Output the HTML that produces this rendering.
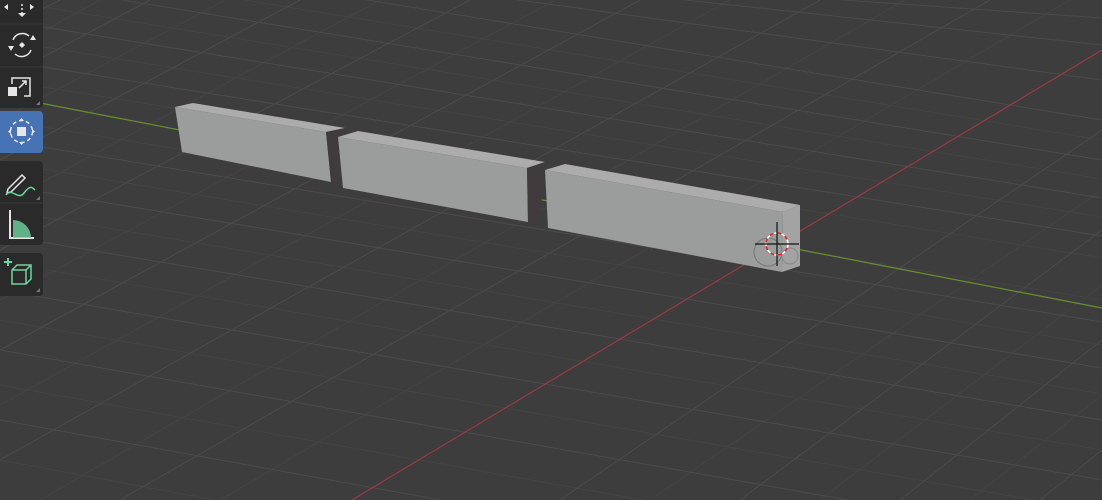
<!DOCTYPE html>
<html><head><style>
html,body{margin:0;padding:0;width:1102px;height:500px;overflow:hidden;background:#3d3d3d;}
svg{display:block;position:absolute;left:0;top:0}
</style></head><body>
<svg width="1102" height="500" viewBox="0 0 1102 500">
<rect width="1102" height="500" fill="#3d3d3d"/>
<g stroke="#444" stroke-width="1" fill="none">
<path d="M0 -40 L1102 140"/><path d="M0 0 L1102 179"/><path d="M0 40 L1102 217"/>
<path d="M0 80 L1102 258"/><path d="M0 120 L1102 300"/><path d="M0 162 L1102 345"/>
<path d="M0 210 L1102 394"/><path d="M0 262 L1102 450"/><path d="M0 320 L1102 512"/>
<path d="M0 385 L1102 582"/><path d="M0 460 L1102 665"/>
<path d="M0 205 L380 0"/><path d="M0 300 L555 0"/><path d="M0 405 L730 0"/>
<path d="M40 500 L905 0"/><path d="M220 500 L1070 0"/><path d="M650 500 L1102 190"/>
<path d="M820 500 L1102 285"/><path d="M970 500 L1102 395"/><path d="M0 120 L225 0"/><path d="M0 55 L100 0"/>
</g>
<g stroke="#4b4b4b" stroke-width="1" fill="none">
<path d="M0 -60 L1102 120"/><path d="M0 -20 L1102 160"/><path d="M0 20 L1102 198"/>
<path d="M0 60 L1102 236"/><path d="M0 140 L1102 322"/><path d="M0 185 L1102 368"/>
<path d="M0 235 L1102 420"/><path d="M0 290 L1102 480"/><path d="M0 350 L1102 545"/>
<path d="M0 420 L1102 620"/><path d="M0 500 L1102 710"/>
<path d="M300 -30 L1102 80"/><path d="M500 -20 L1102 45"/><path d="M700 -10 L1102 18"/>
<path d="M0 160 L300 0"/><path d="M0 250 L470 0"/><path d="M0 350 L640 0"/>
<path d="M0 460 L820 0"/><path d="M120 500 L990 0"/><path d="M560 500 L1102 130"/>
<path d="M740 500 L1102 230"/><path d="M900 500 L1102 340"/><path d="M1040 500 L1102 450"/>
<path d="M0 80 L150 0"/><path d="M0 30 L60 0"/>
</g>
<line x1="40" y1="103" x2="1102" y2="308" stroke="#6a8e2e" stroke-width="1.2"/>
<line x1="352" y1="500" x2="1102" y2="50" stroke="#9a3a44" stroke-width="1.2"/>
<polygon points="175,107 193,103 345,128 326,132" fill="#acacac"/>
<polygon points="175,107 326,132 331,182 182,152" fill="#9b9d9d"/>
<polygon points="326,132 345,128 342,180 331,182" fill="#403c3e"/>
<polygon points="338,137 358,131 545,162 527,168" fill="#acacac"/>
<polygon points="338,137 527,168 528,222 343,188" fill="#9b9d9d"/>
<polygon points="527,168 545,162 540,218 528,222" fill="#403c3e"/>
<polygon points="545,170 565,164 800,205 783,212" fill="#acacac"/>
<polygon points="545,170 783,212 782,272 548,228" fill="#9b9d9d"/>
<polygon points="783,212 800,205 800,266 782,272" fill="#a3a3a3"/>
<circle cx="768" cy="252" r="14" fill="none" stroke="#777" stroke-width="1"/>
<circle cx="790" cy="256" r="8" fill="none" stroke="#888" stroke-width="1"/>
<circle cx="777" cy="244" r="11" fill="none" stroke="#fff" stroke-width="1.5" stroke-dasharray="4 4"/>
<circle cx="777" cy="244" r="11" fill="none" stroke="#e02020" stroke-width="1.5" stroke-dasharray="4 4" stroke-dashoffset="4"/>
<g stroke="#111" stroke-width="1.2"><line x1="777" y1="222" x2="777" y2="266"/><line x1="755" y1="244" x2="799" y2="244"/></g>
<g>
<rect x="-6" y="-10" width="49" height="118" rx="4" fill="#2a2a2a"/>
<line x1="0" y1="24" x2="43" y2="24" stroke="#3a3a3a"/>
<line x1="0" y1="67" x2="43" y2="67" stroke="#3a3a3a"/>
<rect x="-6" y="111" width="49" height="42" rx="4" fill="#4772b3"/>
<rect x="-6" y="161" width="49" height="84" rx="4" fill="#2a2a2a"/>
<line x1="0" y1="203" x2="43" y2="203" stroke="#3a3a3a"/>
<rect x="-6" y="253" width="49" height="43" rx="4" fill="#2a2a2a"/>
</g>
<g fill="#e6e6e6" stroke="#e6e6e6">
<path d="M18 13 l4 4 l4 -4z M8 4 l-4 3 l4 3z M30 4 l4 3 l-4 3z" stroke="none"/>
<line x1="22" y1="4" x2="22" y2="14" stroke-width="1.5" stroke-dasharray="2 2"/>
<path d="M19 45 l3 -3 l3 3 l-3 3z" stroke="none"/>
<path d="M13 40 a10 10 0 0 1 16 -4 M31 50 a10 10 0 0 1 -16 4" fill="none" stroke-width="1.5"/>
<path d="M8 46 l6 0 l-3 5z M30 40 l6 0 l-3 -5z" stroke="none"/>
<rect x="8" y="87" width="9" height="9" stroke="none"/>
<path d="M12 84 v-6 h18 v18 h-6" fill="none" stroke-width="1.5"/>
<path d="M19 88 l7 -7 M22 81 h4 v4" fill="none" stroke-width="1.5"/>
<rect x="17" y="127" width="9" height="9" stroke="none"/>
<circle cx="21.5" cy="131.5" r="11" fill="none" stroke-width="1.5" stroke-dasharray="4 3"/>
<path d="M19 121 l2.5 -3 l2.5 3z M19 142 l2.5 3 l2.5 -3z M11 129 l-3 2.5 l3 2.5z M32 129 l3 2.5 l-3 2.5z" stroke="none"/>
<path d="M8 189 l14 -14 l3 3 l-14 14 l-4 1z" fill="none" stroke-width="1.5"/>
<path d="M6 195 c6 -8 12 6 18 -2 s8 -6 11 -3" fill="none" stroke="#6fd3a0" stroke-width="1.5"/>
<path d="M10 210 v28 h24" fill="none" stroke-width="2"/>
<path d="M13 238 v-18 a18 18 0 0 1 18 18z" fill="#6fd3a0" stroke="none" opacity="0.8"/>
<path d="M12 270 l5 -5 h14 v14 l-5 5 h-14z M12 270 h14 v14 M26 270 l5 -5" fill="none" stroke="#6fd3a0" stroke-width="1.5"/>
<path d="M8 258 v8 M4 262 h8" stroke="#6fd3a0" stroke-width="2"/>
</g>
<g fill="#777"><path d="M40 105 v-4 l-4 4z M40 200 v-4 l-4 4z M40 292 v-4 l-4 4z"/></g>
</svg>
</body></html>
